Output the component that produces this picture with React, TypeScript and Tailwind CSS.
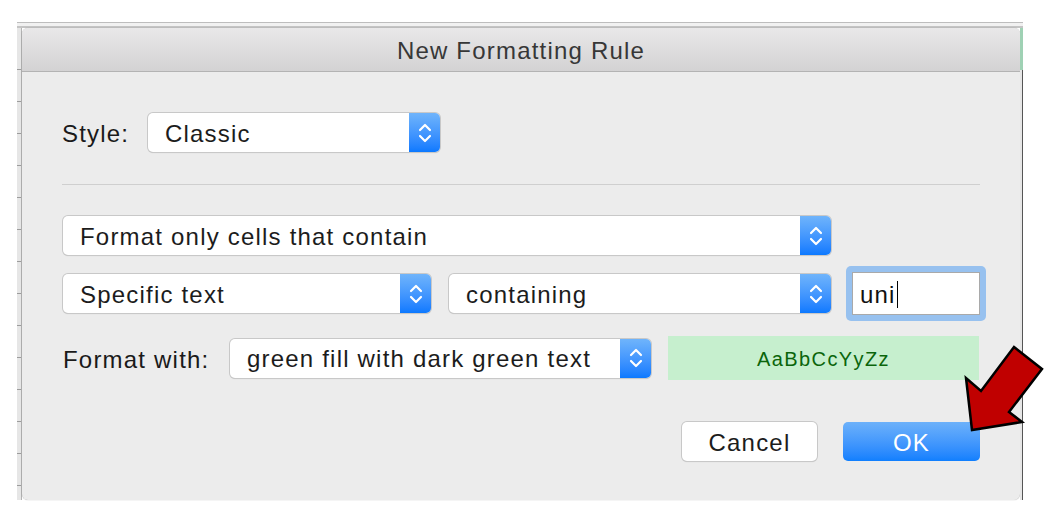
import type { ReactNode } from 'react';

function Stepper() {
  return (
    <div className="w-[31px] shrink-0 rounded-r-[5px] bg-linear-to-b from-[#6fb4fb] to-[#0a79ff] flex items-center justify-center">
      <svg width="14" height="22" viewBox="0 0 14 22" fill="none" stroke="white" strokeWidth="2.2" strokeLinecap="round" strokeLinejoin="round">
        <polyline points="2,8 7,3 12,8" />
        <polyline points="2,14 7,19 12,14" />
      </svg>
    </div>
  );
}

function Select({ children, className }: { children: ReactNode; className: string }) {
  return (
    <div className={`flex h-[39px] shrink-0 rounded-[5px] bg-white shadow-[0_0_0_1px_#c8c8c8,0_1px_1px_rgba(0,0,0,0.18)] ${className}`}>
      <div className="flex-1 flex items-center pl-[17px] pt-[2px] text-[#1c1c1c] whitespace-nowrap">{children}</div>
      <Stepper />
    </div>
  );
}

const ticks = Array.from({ length: 14 });

export default function App() {
  return (
    <div className="relative min-h-screen bg-white font-['Liberation_Sans',Arial,sans-serif] text-[24px] tracking-[1.2px] leading-none">
      <div className="pt-[22px] pl-[17px]">
        <div className="w-[1006px]">
          {/* spreadsheet window behind the sheet */}
          <div className="h-[6px] border-t border-[#bdbdbd] bg-[#f1f1f1] border-b-2 border-b-[#c4c4c4]" />
          <div className="flex h-[472px]">
            <div className="w-[5px] shrink-0 bg-[#e6e6e6] border-r border-[#b4b4b4] flex flex-col pt-[41px] gap-[31px]">
              {ticks.map((_, i) => (
                <div key={i} className="h-px bg-[#9c9c9c]" />
              ))}
            </div>

            <div className="w-[998px] shrink-0 flex flex-col rounded-[6px] bg-[#ececec] overflow-hidden shadow-[0_0_1px_rgba(0,0,0,0.4)]">
              <div className="h-[44px] shrink-0 flex items-center justify-center pt-[3px] bg-linear-to-b from-[#e9e8e9] to-[#d3d2d3] border-b border-[#b3b3b3] text-[#373737]">
                New Formatting Rule
              </div>

              <div className="flex flex-col px-[40px]">
                <div className="mt-[41px] flex items-center h-[39px]">
                  <span className="w-[86px] pt-[3px] text-[#1a1a1a]">Style:</span>
                  <Select className="w-[292px]">Classic</Select>
                </div>

                <div className="mt-[32px] h-px bg-[#cfcfcf]" />

                <div className="mt-[31px] flex pl-px">
                  <Select className="w-[768px]">Format only cells that contain</Select>
                </div>

                <div className="mt-[19px] flex items-center h-[39px] pl-px">
                  <Select className="w-[368px]">Specific text</Select>
                  <Select className="w-[382px] ml-[18px]">containing</Select>
                  <div className="ml-[15px] w-[140px] h-[55px] shrink-0 rounded-[5px] bg-[#97c1ef] p-[6px]">
                    <div className="h-full bg-white border border-[#a9a9a9] flex items-center pl-[7px] pt-[2px] text-[#111]">
                      uni
                      <span className="w-[1.5px] h-[27px] bg-black ml-px" />
                    </div>
                  </div>
                </div>

                <div className="mt-[23px] flex items-center h-[44px] pl-px">
                  <span className="w-[167px] pt-[3px] text-[#1a1a1a] whitespace-nowrap">Format with:</span>
                  <Select className="w-[421px]">green fill with dark green text</Select>
                  <div className="ml-[17px] w-[311px] h-[44px] pt-[2px] bg-[#c6efce] flex items-center justify-center text-[20px] tracking-[1.4px] text-[#0b650b]">
                    AaBbCcYyZz
                  </div>
                </div>

                <div className="mt-[42px] flex justify-end gap-[26px]">
                  <button className="w-[135px] h-[39px] pt-[2px] rounded-[5px] bg-white text-[#1c1c1c] shadow-[0_0_0_1px_#c8c8c8,0_1px_1px_rgba(0,0,0,0.18)]">
                    Cancel
                  </button>
                  <button className="w-[137px] h-[39px] pt-[2px] rounded-[5px] bg-linear-to-b from-[#6cb1fa] to-[#0f7ffe] text-white">
                    OK
                  </button>
                </div>
              </div>
            </div>

            <div className="w-[3px] shrink-0 flex flex-col">
              <div className="h-[42px] bg-[#9fd1b4]" />
              <div className="flex-1 border-r border-[#555] bg-[#e6e6e6]" />
            </div>
          </div>
        </div>
      </div>

      {/* annotation arrow */}
      <svg className="absolute left-0 top-0 pointer-events-none" width="1052" height="529" viewBox="0 0 1052 529">
        <polygon
          points="972,430 966,378 981,391 1014,347 1042,369 1009,412 1022,422"
          fill="#c00000"
          stroke="black"
          strokeWidth="2.5"
          strokeLinejoin="miter"
        />
      </svg>
    </div>
  );
}
